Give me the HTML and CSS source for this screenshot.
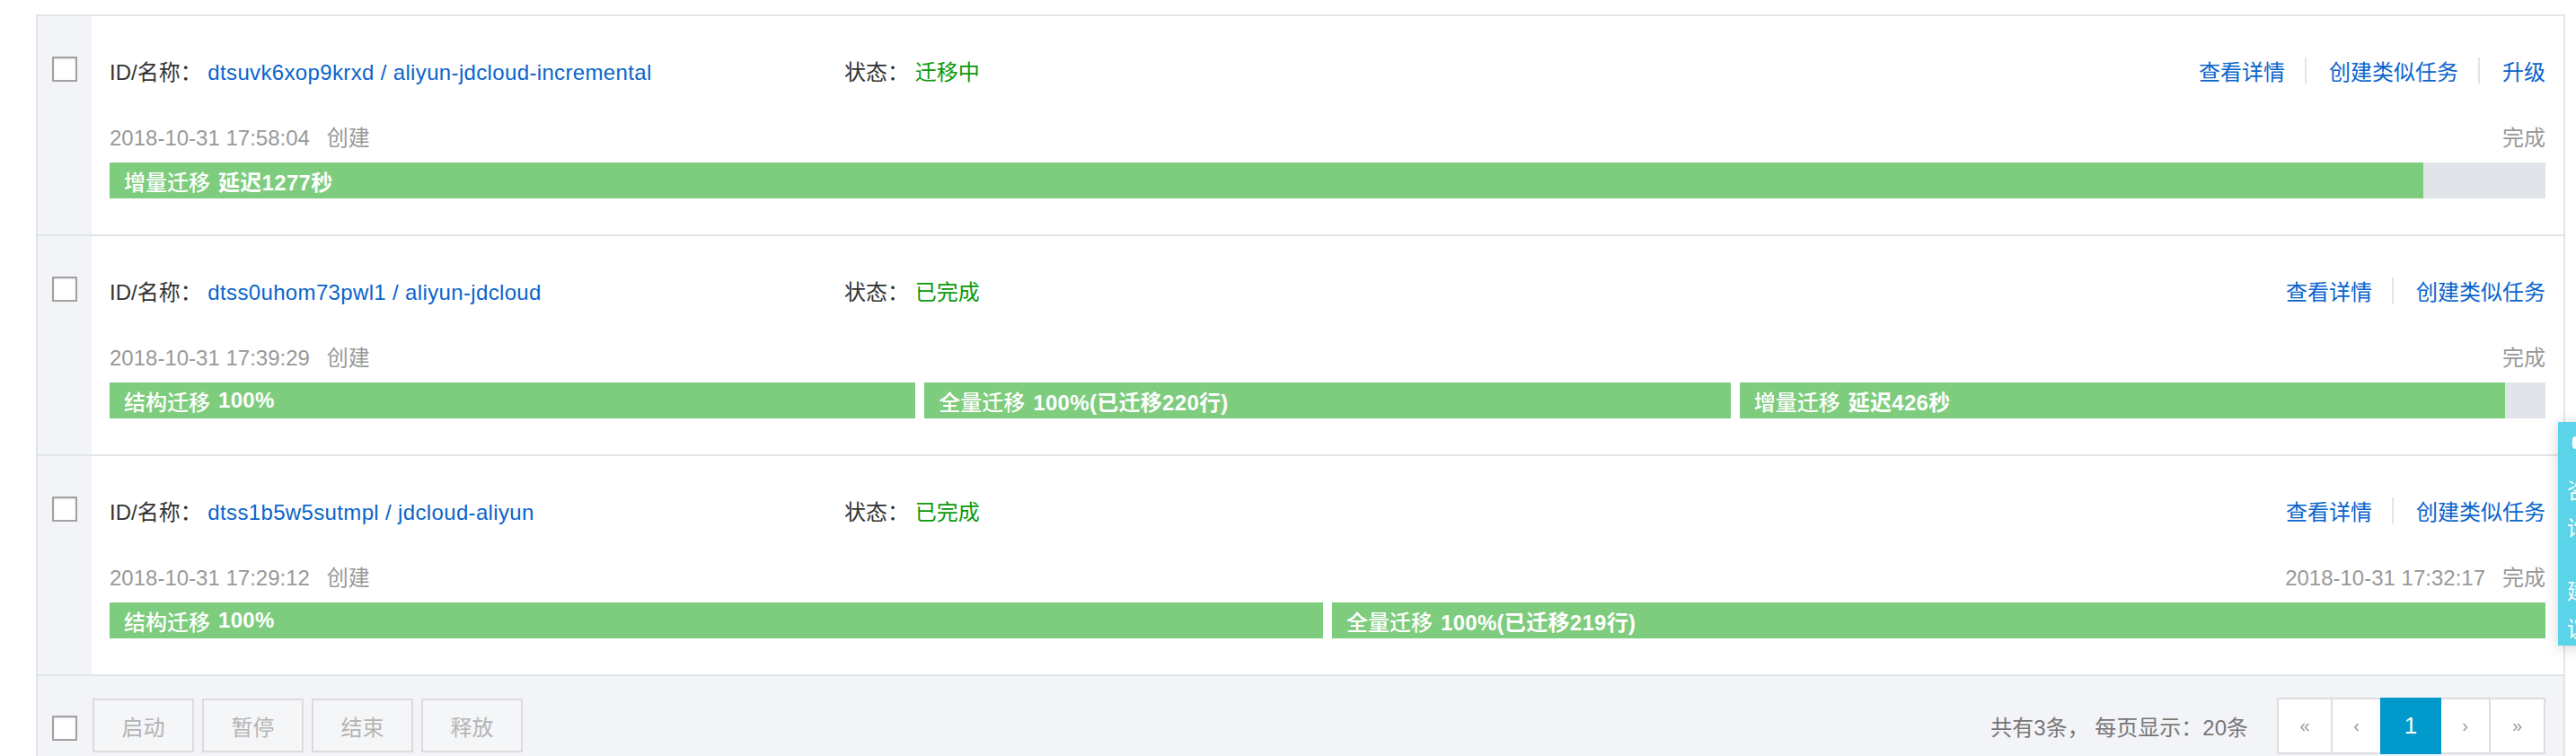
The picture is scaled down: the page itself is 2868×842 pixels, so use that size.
FILE: index.html
```html
<!DOCTYPE html>
<html lang="zh-CN">
<head>
<meta charset="utf-8">
<title>迁移任务列表</title>
<link rel="stylesheet" href="styles.css">
</head>
<body>
<div class="page">
  <div class="panel">

    <div class="task">
      <div class="check-col"><span class="checkbox"></span></div>
      <div class="task-body">
        <div class="task-head">
          <div class="task-id"><span class="label">ID/名称：</span> <a class="link link-id" href="#">dtsuvk6xop9krxd / aliyun-jdcloud-incremental</a></div>
          <div class="task-status"><span class="label">状态：</span> <span class="status-ok">迁移中</span></div>
          <div class="actions">
            <a class="link" href="#">查看详情</a><span class="action-sep"></span><a class="link" href="#">创建类似任务</a><span class="action-sep"></span><a class="link" href="#">升级</a>
          </div>
        </div>
        <div class="task-meta">
          <div><span>2018-10-31 17:58:04</span><span class="meta-tag">创建</span></div>
          <div><span>完成</span></div>
        </div>
        <div class="bars">
          <div class="seg"><div class="fill" style="width:95%"><span class="fill-name">增量迁移</span><span class="fill-value">延迟1277秒</span></div></div>
        </div>
      </div>
    </div>

    <div class="task">
      <div class="check-col"><span class="checkbox"></span></div>
      <div class="task-body">
        <div class="task-head">
          <div class="task-id"><span class="label">ID/名称：</span> <a class="link link-id" href="#">dtss0uhom73pwl1 / aliyun-jdcloud</a></div>
          <div class="task-status"><span class="label">状态：</span> <span class="status-ok">已完成</span></div>
          <div class="actions">
            <a class="link" href="#">查看详情</a><span class="action-sep"></span><a class="link" href="#">创建类似任务</a>
          </div>
        </div>
        <div class="task-meta">
          <div><span>2018-10-31 17:39:29</span><span class="meta-tag">创建</span></div>
          <div><span>完成</span></div>
        </div>
        <div class="bars">
          <div class="seg"><div class="fill" style="width:100%"><span class="fill-name">结构迁移</span><span class="fill-value">100%</span></div></div>
          <div class="seg"><div class="fill" style="width:100%"><span class="fill-name">全量迁移</span><span class="fill-value">100%(已迁移220行)</span></div></div>
          <div class="seg"><div class="fill" style="width:95%"><span class="fill-name">增量迁移</span><span class="fill-value">延迟426秒</span></div></div>
        </div>
      </div>
    </div>

    <div class="task">
      <div class="check-col"><span class="checkbox"></span></div>
      <div class="task-body">
        <div class="task-head">
          <div class="task-id"><span class="label">ID/名称：</span> <a class="link link-id" href="#">dtss1b5w5sutmpl / jdcloud-aliyun</a></div>
          <div class="task-status"><span class="label">状态：</span> <span class="status-ok">已完成</span></div>
          <div class="actions">
            <a class="link" href="#">查看详情</a><span class="action-sep"></span><a class="link" href="#">创建类似任务</a>
          </div>
        </div>
        <div class="task-meta">
          <div><span>2018-10-31 17:29:12</span><span class="meta-tag">创建</span></div>
          <div><span>2018-10-31 17:32:17</span><span class="meta-tag">完成</span></div>
        </div>
        <div class="bars">
          <div class="seg"><div class="fill" style="width:100%"><span class="fill-name">结构迁移</span><span class="fill-value">100%</span></div></div>
          <div class="seg"><div class="fill" style="width:100%"><span class="fill-name">全量迁移</span><span class="fill-value">100%(已迁移219行)</span></div></div>
        </div>
      </div>
    </div>

    <div class="footer">
      <div class="check-col footer-check"><span class="checkbox"></span></div>
      <div class="batch">
        <button class="btn" disabled>启动</button>
        <button class="btn" disabled>暂停</button>
        <button class="btn" disabled>结束</button>
        <button class="btn" disabled>释放</button>
      </div>
      <div class="pager-wrap">
        <span class="pager-info">共有3条， 每页显示：20条</span>
        <div class="pager">
          <a class="pg pg-first" href="#">«</a>
          <a class="pg pg-prev" href="#">‹</a>
          <a class="pg pg-active" href="#">1</a>
          <a class="pg pg-next" href="#">›</a>
          <a class="pg pg-last" href="#">»</a>
        </div>
      </div>
    </div>

  </div>
</div>

<div class="side-tab">
  <span class="side-icon"></span>
  <div class="side-text">咨<br>询</div>
  <div class="side-text side-text-2">建<br>议</div>
</div>
</body>
</html>
```

FILE: styles.css
```css
html, body {
  margin: 0;
  padding: 0;
  overflow: hidden;
  background: #ffffff;
}

body {
  font-family: "Liberation Sans", "Noto Sans CJK SC", sans-serif;
  font-size: 24px;
  color: #333333;
}

.page {
  padding: 16px 12px 0 40px;
}

.panel {
  border: 2px solid #e1e5ea;
  border-bottom: none;
}

.task {
  display: flex;
  border-bottom: 2px solid #e1e5ea;
}

.check-col {
  flex: 0 0 60px;
  background: #f3f4f8;
  display: flex;
  justify-content: center;
  align-items: flex-start;
  padding-top: 45px;
}

.checkbox {
  display: block;
  width: 28px;
  height: 28px;
  box-sizing: border-box;
  border: 2px solid #a2a2a2;
  background: #ffffff;
  box-shadow: inset 0 1px 2px rgba(0, 0, 0, 0.12);
}

.task-body {
  flex: 1;
  min-width: 0;
  padding: 40px 20px 40px 20px;
}

.task-head {
  display: flex;
  align-items: center;
  height: 40px;
  white-space: nowrap;
}

.task-id {
  flex: 0 0 818px;
}

.label {
  color: #333333;
}

.link {
  color: #0a64cc;
  text-decoration: none;
}

.link-id {
  letter-spacing: 0.35px;
}

.status-ok {
  color: #0a9a0a;
}

.actions {
  margin-left: auto;
  display: flex;
  align-items: center;
}

.action-sep {
  display: block;
  width: 2px;
  height: 29px;
  background: #e2e4e8;
  margin: 0 25px 0 22px;
}

.task-meta {
  display: flex;
  justify-content: space-between;
  margin-top: 38px;
  height: 36px;
  line-height: 36px;
  color: #999999;
  white-space: nowrap;
}

.meta-tag {
  margin-left: 19px;
}

.bars {
  display: flex;
  gap: 10px;
  margin-top: 9px;
  height: 40px;
}

.seg {
  flex: 1;
  min-width: 0;
  background: #e1e4e8;
}

.fill {
  height: 100%;
  box-sizing: border-box;
  background: #7ecc7e;
  color: #ffffff;
  display: flex;
  align-items: center;
  padding-left: 16px;
  white-space: nowrap;
}

.fill-name {
  font-weight: 500;
}

.fill-value {
  font-weight: 700;
  margin-left: 9px;
  letter-spacing: 0.3px;
}

.footer {
  display: flex;
  background: #f3f4f8;
  height: 120px;
}

.footer-check {
  padding-top: 44px;
}

.batch {
  display: flex;
  align-items: flex-start;
  gap: 9px;
  margin-left: 1px;
  padding-top: 25px;
}

.btn {
  width: 113px;
  height: 60px;
  box-sizing: border-box;
  border: 2px solid #dcdcdc;
  background: #f5f6f8;
  color: #b4b4b4;
  font-family: "Liberation Sans", "Noto Sans CJK SC", sans-serif;
  font-size: 24px;
  padding: 0;
}

.pager-wrap {
  margin-left: auto;
  display: flex;
  align-items: center;
  align-self: flex-start;
  margin-top: 24px;
  height: 63px;
  padding-right: 20px;
}

.pager-info {
  color: #777777;
  margin-right: 32px;
  white-space: nowrap;
}

.pager {
  display: flex;
  height: 63px;
}

.pg {
  display: flex;
  align-items: center;
  justify-content: center;
  box-sizing: border-box;
  height: 63px;
  border: 2px solid #dddddd;
  background: #ffffff;
  margin-left: -2px;
  color: #9a9a9a;
  font-size: 20px;
  text-decoration: none;
}

.pg-first {
  margin-left: 0;
  width: 62px;
}

.pg-prev,
.pg-next {
  width: 57px;
}

.pg-last {
  width: 63px;
}

.pg-active {
  position: relative;
  z-index: 1;
  width: 68px;
  background: #0099cc;
  border-color: #0099cc;
  color: #ffffff;
  font-size: 26px;
}

.side-tab {
  position: fixed;
  left: 2848px;
  top: 470px;
  width: 60px;
  height: 249px;
  box-sizing: border-box;
  padding: 16px 0 0 10px;
  background: #5bd3e8;
  color: #ffffff;
  box-shadow: 0 2px 14px rgba(0, 0, 0, 0.18);
  font-size: 24px;
  line-height: 42px;
}

.side-icon {
  display: block;
  margin-left: 6px;
  width: 12px;
  height: 14px;
  border-radius: 4px;
  background: #ffffff;
}

.side-text {
  margin-top: 26px;
}

.side-text-2 {
  margin-top: 28px;
}
```
